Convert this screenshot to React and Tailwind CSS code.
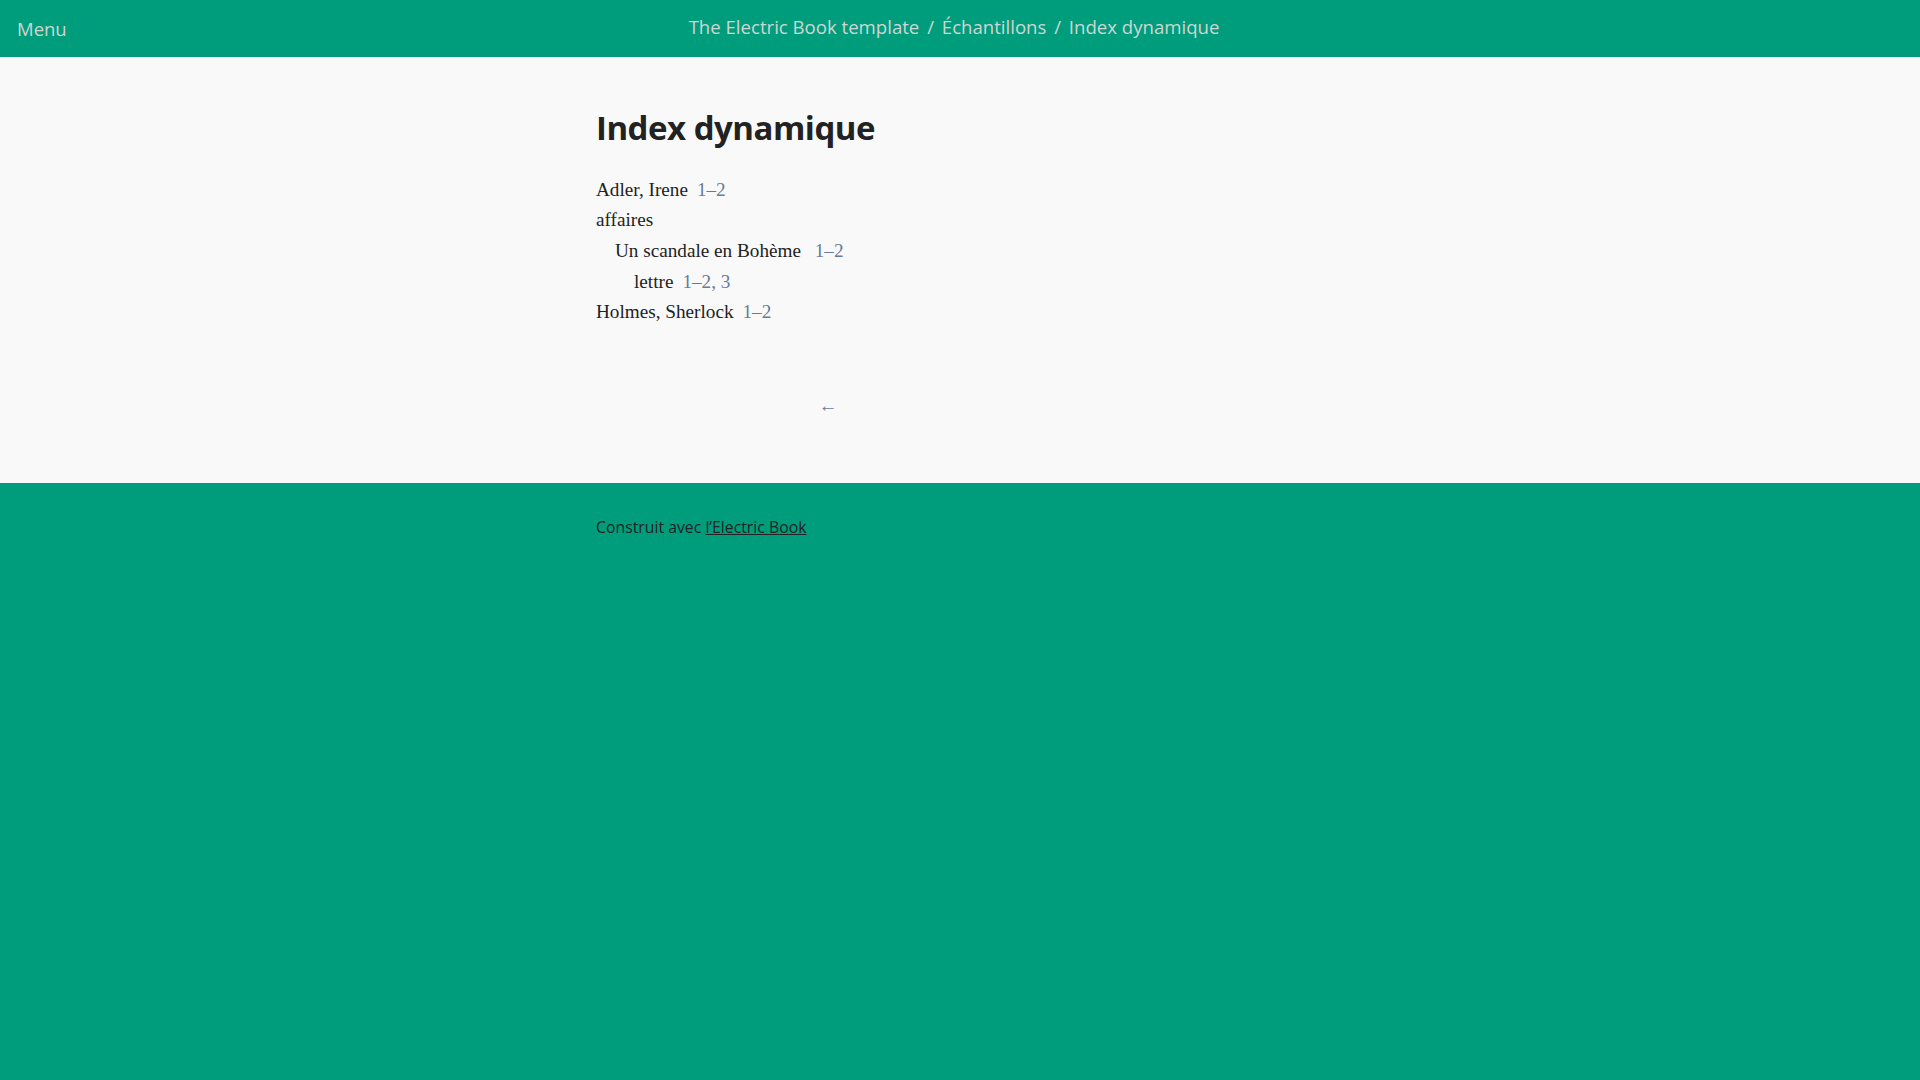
const sans = { fontFamily: '"Open Sans", "Noto Sans", sans-serif' };

const entries = [
  { level: 0, term: 'Adler, Irene', refs: ['1–2'] },
  { level: 0, term: 'affaires', refs: [] },
  { level: 1, term: 'Un scandale en Bohème ', refs: ['1–2'] },
  { level: 2, term: 'lettre', refs: ['1–2', '3'] },
  { level: 0, term: 'Holmes, Sherlock', refs: ['1–2'] },
];

const indent = ['pl-0', 'pl-[19px]', 'pl-[38px]'];

const App = () => {
  return (
    <div className="min-h-screen flex flex-col bg-[#f9f9f9]">
      {/* Header */}
      <header className="h-[57px] bg-[#009d7d] flex items-center justify-center relative">
        <a className="absolute left-[17px] top-[15px] text-[18.5px] text-[#cfd5d2]" style={sans}>
          Menu
        </a>
        <nav className="text-center text-[18.6px] text-[#cfd5d2] -mt-[3px] mr-[12px]" style={sans}>
          The Electric Book template <span className="px-[3px]">/</span> Échantillons <span className="px-[3px]">/</span> Index dynamique
        </nav>
      </header>

      {/* Content */}
      <main className="w-[728px] mx-auto pt-[51px] pb-[66px]">
        <h1 className="text-[33px] font-bold leading-[1.2] text-[#222] tracking-[-0.5px] mb-[27px]" style={sans}>
          Index dynamique
        </h1>
        <ul className="text-[19.2px] leading-[1.6] text-[#222]" style={{ fontFamily: '"Liberation Serif", serif' }}>
          {entries.map((e, i) => (
            <li key={i} className={indent[e.level]}>
              {e.term}
              {e.refs.length > 0 && (
                <span className="ml-[9px] text-[#667a9c]">
                  {e.refs.map((r, j) => (
                    <span key={j}>
                      {j > 0 && ', '}
                      <a>{r}</a>
                    </span>
                  ))}
                </span>
              )}
            </li>
          ))}
        </ul>
        <div className="w-[464px] text-center mt-[65px] text-[19px] leading-[24px] text-[#667a9c]" style={sans}>
          ←
        </div>
      </main>

      {/* Footer */}
      <footer className="flex-1 bg-[#009d7d]">
        <div className="w-[728px] mx-auto pt-[33px]">
          <p className="text-[15.8px] text-[#222]" style={sans}>
            Construit avec <a className="underline">l’Electric Book</a>
          </p>
        </div>
      </footer>
    </div>
  );
};

export default App;
